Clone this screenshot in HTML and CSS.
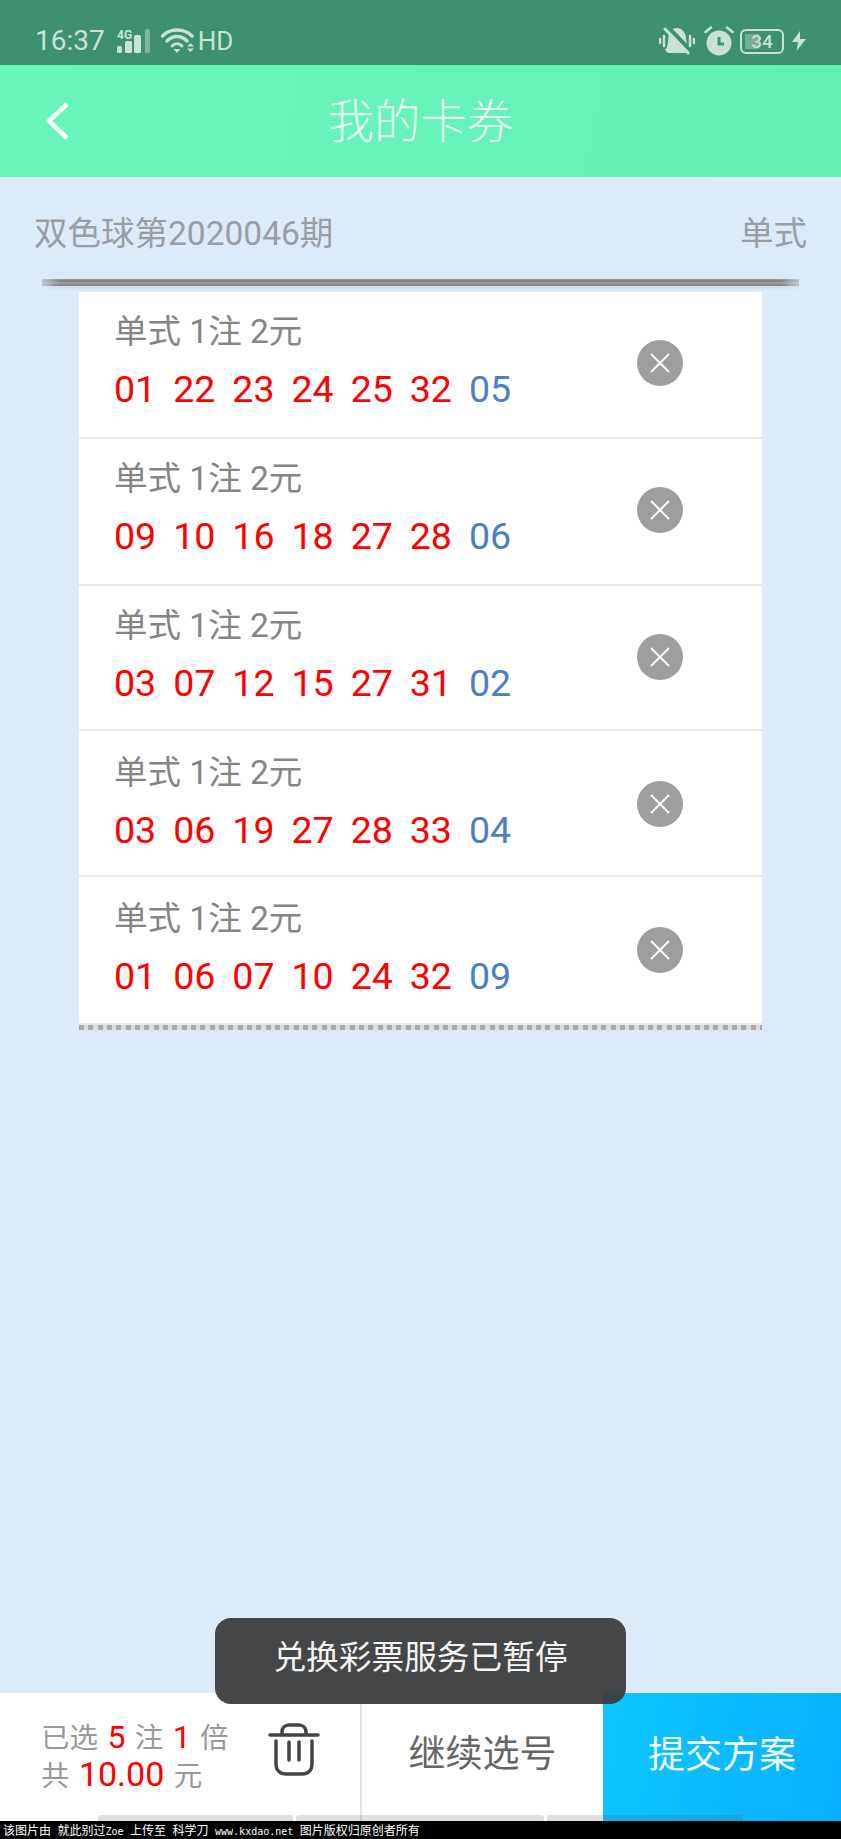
FILE: index.html
```html
<!DOCTYPE html>
<html lang="zh-CN">
<head>
    <meta charset="UTF-8">
    <title>我的卡券</title>
    <link rel="stylesheet" href="styles.css">
</head>
<body>
    <div class="page">
        <div class="status-bar">
            <div class="status-left">
                <span class="time">16:37</span>
                <svg class="ic-signal" width="34" height="24" viewBox="0 0 34 24">
                    <text x="0" y="10" class="net">4G</text>
                    <rect x="0" y="17" width="5" height="7" rx="1.500" fill="#c8e2d8"/>
                    <rect x="8" y="12" width="7" height="12" rx="1.500" fill="#c8e2d8"/>
                    <rect x="17" y="6" width="7" height="18" rx="1.500" fill="#c8e2d8"/>
                    <rect x="28" y="0" width="5" height="24" rx="1.500" fill="#7fb5a0"/>
                </svg>
                <svg class="ic-wifi" width="34" height="26" viewBox="0 0 34 26">
                    <path d="M1.500 8C9 0 23 0 31 8" fill="none" stroke="#c8e2d8" stroke-width="3.500" stroke-linecap="round"/>
                    <path d="M6 13C12 7 20 7 26 13" fill="none" stroke="#c8e2d8" stroke-width="3.500" stroke-linecap="round"/>
                    <path d="M11 18C14 15 18 15 21 18" fill="none" stroke="#c8e2d8" stroke-width="3" stroke-linecap="round"/>
                    <path d="M12.500 21H19.500L16 25Z" fill="#c8e2d8"/>
                    <path d="M26 18.500L29.500 15L33 18.500ZM26 20.500H33L29.500 24Z" fill="#c8e2d8"/>
                </svg>
                <span class="hd">HD</span>
            </div>
            <div class="status-right">
                <svg class="ic-bell" width="36" height="28" viewBox="0 0 36 28">
                    <path d="M6 23C9 20 9 15 9.500 10C10 4 14 1 18 1C23 1 26 5 27 10C27.500 15 28 20 31 24L26 26H9Z" fill="#c8e2d8"/>
                    <path d="M9 0L32 24" stroke="#3d9070" stroke-width="4"/>
                    <path d="M6 2L29 26" stroke="#c8e2d8" stroke-width="3" stroke-linecap="round"/>
                    <path d="M1 12V16M5 9V19M31 9V19M35 12V16" stroke="#c8e2d8" stroke-width="2.500" stroke-linecap="round"/>
                </svg>
                <svg class="ic-alarm" width="30" height="30" viewBox="0 0 30 30">
                    <circle cx="15" cy="17" r="12.500" fill="#c8e2d8"/>
                    <path d="M15 11V18H20" fill="none" stroke="#3d9070" stroke-width="3"/>
                    <path d="M1.500 6L7 1.500M23 1.500L28.500 6" stroke="#c8e2d8" stroke-width="2.500" stroke-linecap="round"/>
                </svg>
                <div class="battery"><span class="battery-fill"></span><span class="battery-num">34</span></div>
                <svg class="ic-bolt" width="14" height="20" viewBox="0 0 14 20">
                    <path d="M8 0L0 11H6L4.500 20L14 8H8Z" fill="#c8e2d8"/>
                </svg>
            </div>
        </div>

        <div class="header">
            <svg class="back" width="26" height="40" viewBox="0 0 26 40">
                <path d="M23 3L5 20L23 37" fill="none" stroke="#fff" stroke-width="4.500"/>
            </svg>
            <h1>我的卡券</h1>
        </div>

        <div class="main">
            <div class="issue-row">
                <span>双色球第2020046期</span>
                <span>单式</span>
            </div>
            <div class="slot"></div>
            <div class="ticket">
                <div class="ticket-row">
                    <div>
                        <div class="ticket-label">单式 1注 2元</div>
                        <div class="nums"><span>01</span><span>22</span><span>23</span><span>24</span><span>25</span><span>32</span><span class="blue">05</span></div>
                    </div>
                    <div class="del"><svg width="22" height="22" viewBox="0 0 22 22"><path d="M2 2L20 20M20 2L2 20" stroke="#fff" stroke-width="2"/></svg></div>
                </div>
                <div class="ticket-row">
                    <div>
                        <div class="ticket-label">单式 1注 2元</div>
                        <div class="nums"><span>09</span><span>10</span><span>16</span><span>18</span><span>27</span><span>28</span><span class="blue">06</span></div>
                    </div>
                    <div class="del"><svg width="22" height="22" viewBox="0 0 22 22"><path d="M2 2L20 20M20 2L2 20" stroke="#fff" stroke-width="2"/></svg></div>
                </div>
                <div class="ticket-row">
                    <div>
                        <div class="ticket-label">单式 1注 2元</div>
                        <div class="nums"><span>03</span><span>07</span><span>12</span><span>15</span><span>27</span><span>31</span><span class="blue">02</span></div>
                    </div>
                    <div class="del"><svg width="22" height="22" viewBox="0 0 22 22"><path d="M2 2L20 20M20 2L2 20" stroke="#fff" stroke-width="2"/></svg></div>
                </div>
                <div class="ticket-row">
                    <div>
                        <div class="ticket-label">单式 1注 2元</div>
                        <div class="nums"><span>03</span><span>06</span><span>19</span><span>27</span><span>28</span><span>33</span><span class="blue">04</span></div>
                    </div>
                    <div class="del"><svg width="22" height="22" viewBox="0 0 22 22"><path d="M2 2L20 20M20 2L2 20" stroke="#fff" stroke-width="2"/></svg></div>
                </div>
                <div class="ticket-row">
                    <div>
                        <div class="ticket-label">单式 1注 2元</div>
                        <div class="nums"><span>01</span><span>06</span><span>07</span><span>10</span><span>24</span><span>32</span><span class="blue">09</span></div>
                    </div>
                    <div class="del"><svg width="22" height="22" viewBox="0 0 22 22"><path d="M2 2L20 20M20 2L2 20" stroke="#fff" stroke-width="2"/></svg></div>
                </div>
                <div class="ticket-edge"></div>
            </div>
        </div>

        <div class="bottom-bar">
            <div class="summary">
                <div class="summary-text">
                    <div>已选 <em>5</em> 注 <em>1</em> 倍</div>
                    <div>共 <em class="total">10.00</em> 元</div>
                </div>
                <svg class="trash" width="52" height="54" viewBox="0 0 52 54">
                    <path d="M2 12H50" stroke="#444" stroke-width="3.500" stroke-linecap="round"/>
                    <path d="M14 12V9C14 5 17 2 21 2H31C35 2 38 5 38 9V12" fill="none" stroke="#444" stroke-width="3.500"/>
                    <path d="M8 18V41C8 47 12 51 18 51H34C40 51 44 47 44 41V18" fill="none" stroke="#444" stroke-width="3.500" stroke-linecap="round"/>
                    <path d="M21 19V37M31 19V37" stroke="#444" stroke-width="3.500" stroke-linecap="round"/>
                </svg>
            </div>
            <div class="continue">继续选号</div>
            <div class="submit">提交方案</div>
            <div class="nav-hint">
                <span class="hint-a"></span><span class="hint-b"></span><span class="hint-c"></span>
            </div>
        </div>

        <div class="watermark">该图片由 就此别过<span class="latin">Zoe</span> 上传至 科学刀 <span class="latin">www.kxdao.net</span> 图片版权归原创者所有</div>

        <div class="toast">兑换彩票服务已暂停</div>
    </div>
</body>
</html>
```

FILE: styles.css
```css
* {
    box-sizing: border-box;
}
body {
    margin: 0;
    font-family: "Roboto", "Noto Sans CJK SC", sans-serif;
    background: #000;
}
.page {
    position: relative;
    width: 841px;
    height: 1839px;
    display: flex;
    flex-direction: column;
    background: #ddebf9;
    overflow: hidden;
}
.status-bar {
    height: 65px;
    background: #3d9070;
    display: flex;
    justify-content: space-between;
    align-items: flex-end;
    padding: 0 35px 9px 35px;
    color: #c8e2d8;
}
.status-left, .status-right {
    display: flex;
    align-items: center;
}
.time {
    font-size: 28px;
    line-height: 30px;
    margin-right: 12px;
}
.net {
    font-family: "Roboto", sans-serif;
    font-size: 12px;
    font-weight: 700;
    fill: #c8e2d8;
}
.ic-wifi {
    margin-left: 10px;
}
.hd {
    font-size: 26px;
    line-height: 30px;
    margin-left: 3px;
}
.ic-bell {
    margin-right: 9px;
}
.ic-alarm {
    margin-right: 6px;
}
.ic-bolt {
    margin-left: 8px;
}
.battery {
    position: relative;
    width: 44px;
    height: 25px;
    border: 2px solid #c8e2d8;
    border-radius: 6px;
    font-size: 19px;
    font-weight: 500;
    line-height: 21px;
    text-align: center;
}
.battery-fill {
    position: absolute;
    left: 3px;
    top: 3px;
    width: 14px;
    height: 15px;
    background: #77ae99;
}
.battery-num {
    position: relative;
}
.header {
    height: 112px;
    background: linear-gradient(100deg, #68f6ba, #62f0b4);
    display: grid;
    grid-template-columns: 1fr auto 1fr;
    align-items: center;
    padding-left: 44px;
}
.back {
    grid-column: 1;
    grid-row: 1;
    margin-top: -1px;
}
.header h1 {
    grid-column: 2;
    margin: -7px 0 0 -44px;
    font-family: "Noto Sans CJK SC", sans-serif;
    font-size: 46.500px;
    font-weight: 300;
    line-height: 60px;
    color: #e6fbf2;
}
.main {
    flex: 1;
}
.issue-row {
    height: 102px;
    padding: 35px 34px 0;
    display: flex;
    justify-content: space-between;
    font-size: 33.500px;
    line-height: 44px;
    color: #9a9da1;
}
.slot {
    width: 757px;
    height: 12px;
    margin-left: 42px;
    background:
        linear-gradient(90deg, rgba(221, 235, 249, 0.6) 0, transparent 18px, transparent 739px, rgba(221, 235, 249, 0.6) 757px),
        linear-gradient(180deg, #a0a0a0 0, #7b7b7b 2px, #a5a5a5 4px, #808080 6px, #8c8c8c 7px, #cfdbe8 7px, #ddebf9 12px);
}
.ticket {
    width: 683px;
    margin: 1px 0 0 79px;
    background: #fff;
}
.ticket-row {
    height: 147px;
    padding: 18px 79px 0 35px;
    border-bottom: 2px solid #ebe7ea;
    display: flex;
    justify-content: space-between;
    align-items: flex-start;
}
.ticket-row:nth-child(3) {
    height: 145px;
}
.ticket-row:nth-child(4) {
    height: 146px;
    padding-top: 20px;
}
.ticket-row:nth-child(5) {
    height: 146px;
    padding-top: 20px;
    border-bottom: none;
}
.ticket-label {
    font-size: 33.500px;
    line-height: 44px;
    color: #858585;
}
.nums {
    display: flex;
    gap: 17px;
    margin-top: 12px;
    font-size: 37.500px;
    line-height: 46px;
    color: #f00;
}
.nums .blue {
    color: #4a7fc4;
}
.del {
    width: 46px;
    height: 46px;
    margin-top: 30px;
    border-radius: 50%;
    background: #9e9e9e;
    display: flex;
    justify-content: center;
    align-items: center;
}
.ticket-edge {
    height: 7px;
    border-top: 2px solid #ece9ea;
    background: repeating-linear-gradient(90deg, #a9a9a9 0, #a9a9a9 5px, #dcdcdc 5px, #dcdcdc 9.330px);
}
.bottom-bar {
    position: relative;
    height: 129px;
    background: #fff;
    border-top: 1px solid #e8eef4;
    display: flex;
}
.summary {
    width: 362px;
    padding: 24px 40px 0 41px;
    display: flex;
    justify-content: space-between;
    border-right: 2px solid #e2e2e2;
}
.summary-text {
    font-family: "Noto Sans CJK SC", sans-serif;
    font-size: 28.500px;
    line-height: 37.500px;
    word-spacing: 3px;
    color: #999;
    white-space: nowrap;
}
.summary-text em {
    font-family: "Roboto", sans-serif;
    font-style: normal;
    font-size: 32px;
    line-height: 1;
    color: #f00;
}
.summary-text .total {
    font-size: 34px;
}
.trash {
    margin-top: 6px;
    flex: none;
}
.continue {
    width: 241px;
    font-size: 37px;
    line-height: 124px;
    text-align: center;
    color: #666;
}
.submit {
    flex: 1;
    background: linear-gradient(100deg, #0dc6ff, #08b0ff);
    font-size: 37px;
    line-height: 125px;
    text-align: center;
    color: #f2fbff;
}
.nav-hint {
    position: absolute;
    left: 98px;
    bottom: 0;
    display: flex;
    gap: 3px;
}
.nav-hint span {
    height: 6px;
    background: rgba(80, 80, 80, 0.18);
    border-radius: 3px 3px 0 0;
}
.hint-a {
    width: 195px;
}
.hint-b {
    width: 248px;
}
.hint-c {
    width: 196px;
}
.watermark {
    height: 18px;
    background: #000;
    color: #fff;
    font-family: "Noto Sans CJK SC", sans-serif;
    font-size: 12px;
    line-height: 18px;
    word-spacing: 3.800px;
    padding-left: 3px;
    white-space: nowrap;
}
.watermark .latin {
    font-family: "DejaVu Sans Mono", monospace;
    font-size: 10px;
}
.toast {
    position: absolute;
    left: 215px;
    top: 1618px;
    width: 411px;
    height: 86px;
    border-radius: 16px;
    background: rgba(60, 60, 60, 0.94);
    color: #f5f5f5;
    font-family: "Noto Sans CJK SC", sans-serif;
    font-size: 32.700px;
    line-height: 74px;
    text-align: center;
}
```
